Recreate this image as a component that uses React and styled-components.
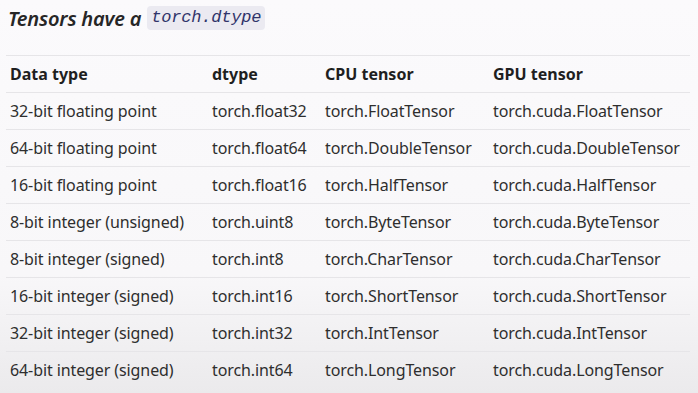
import React from 'react'
import styled, { createGlobalStyle } from 'styled-components'

const GlobalStyle = createGlobalStyle`
  html, body {
    margin: 0;
    padding: 0;
  }
  body {
    width: 698px;
    height: 393px;
    overflow: hidden;
    font-family: "Noto Sans", "Open Sans", sans-serif;
    color: #2b2b2b;
    background: linear-gradient(to bottom, #fbfafc 0%, #f8f7f9 70%, #ebeaec 100%);
  }
`

const Page = styled.div`
  padding: 1px 8px 0 6px;
`

const Title = styled.h2`
  margin: 0 0 0 2px;
  height: 34px;
  display: flex;
  align-items: center;
  gap: 6px;
  font-size: 20px;
  font-style: italic;
  font-weight: 600;
  color: #262626;
  letter-spacing: -0.2px;
`

const Code = styled.code`
  background: #ebeaf1;
  border-radius: 4px;
  padding: 2px 4px 3px;
  font-family: "Liberation Mono", "DejaVu Sans Mono", monospace;
  font-size: 17px;
  font-style: italic;
  font-weight: 400;
  color: #30346a;
`

const Table = styled.table`
  margin-top: 20px;
  width: 684px;
  border-collapse: collapse;
  table-layout: fixed;
  font-size: 16px;
`

const Row = styled.tr`
  height: 37px;
  border-top: 1px solid #e6e5e8;
`

const HeadCell = styled.th`
  text-align: left;
  font-weight: 700;
  color: #1f1f1f;
  padding: 0 0 0 4px;
  width: ${p => p.$w}px;
`

const Cell = styled.td`
  padding: 0 0 0 4px;
  white-space: nowrap;
  color: #2e2e2e;
  letter-spacing: -0.1px;
`

const columns = [
  { label: 'Data type', w: 198 },
  { label: 'dtype', w: 109 },
  { label: 'CPU tensor', w: 164 },
  { label: 'GPU tensor', w: 197 },
]

const rows = [
  ['32-bit floating point', 'torch.float32', 'torch.FloatTensor', 'torch.cuda.FloatTensor'],
  ['64-bit floating point', 'torch.float64', 'torch.DoubleTensor', 'torch.cuda.DoubleTensor'],
  ['16-bit floating point', 'torch.float16', 'torch.HalfTensor', 'torch.cuda.HalfTensor'],
  ['8-bit integer (unsigned)', 'torch.uint8', 'torch.ByteTensor', 'torch.cuda.ByteTensor'],
  ['8-bit integer (signed)', 'torch.int8', 'torch.CharTensor', 'torch.cuda.CharTensor'],
  ['16-bit integer (signed)', 'torch.int16', 'torch.ShortTensor', 'torch.cuda.ShortTensor'],
  ['32-bit integer (signed)', 'torch.int32', 'torch.IntTensor', 'torch.cuda.IntTensor'],
  ['64-bit integer (signed)', 'torch.int64', 'torch.LongTensor', 'torch.cuda.LongTensor'],
]

export default function App() {
  return (
    <Page>
      <GlobalStyle />
      <Title>
        Tensors have a <Code>torch.dtype</Code>
      </Title>
      <Table>
        <thead>
          <Row>
            {columns.map(c => (
              <HeadCell key={c.label} $w={c.w}>{c.label}</HeadCell>
            ))}
          </Row>
        </thead>
        <tbody>
          {rows.map((r, i) => (
            <Row key={i}>
              {r.map((v, j) => <Cell key={j}>{v}</Cell>)}
            </Row>
          ))}
        </tbody>
      </Table>
    </Page>
  )
}
